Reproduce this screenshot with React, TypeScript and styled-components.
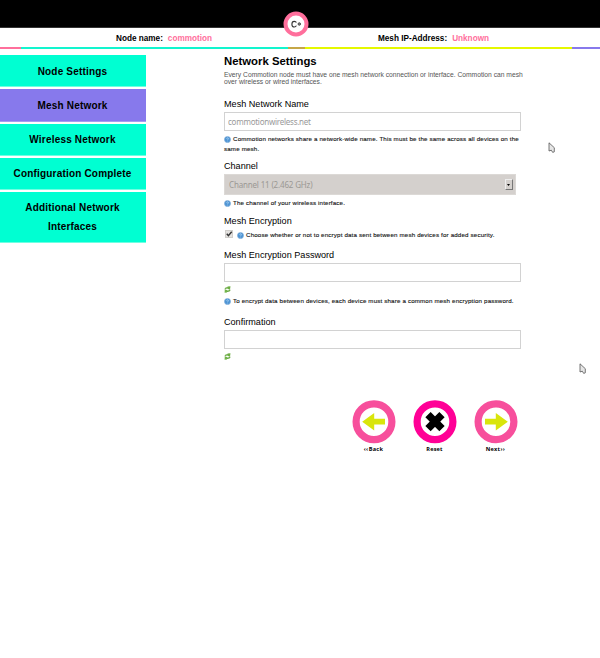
import React from "react";
import styled, { createGlobalStyle } from "styled-components";

const GlobalStyle = createGlobalStyle`
  * { box-sizing: border-box; }
  body { margin: 0; background: #fff; color: #000; font-family: "Liberation Sans", Arial, sans-serif; }
`;

const Page = styled.div`
  position: relative;
  height: 658px;
  overflow: hidden;
`;

const TopBar = styled.header`
  height: 28px;
  background: #000;
  border-bottom: 1px solid #333;
  display: flex;
  justify-content: center;
`;

const Logo = styled.svg`
  position: relative;
  z-index: 1;
  flex: none;
  width: 26px;
  height: 26px;
  margin: 10.5px 8px 0 0;
`;

const InfoBar = styled.div`
  height: 19px;
  display: flex;
  padding-left: 116px;
  font-size: 8.2px;
  font-weight: bold;
  line-height: 21px;
  white-space: nowrap;
`;

const Info = styled.div<{ $width?: number }>`
  width: ${(p) => (p.$width ? `${p.$width}px` : "auto")};
  display: flex;
  gap: 5px;
`;

const InfoValue = styled.span`
  color: #ff6f9c;
`;

const Stripe = styled.div`
  display: flex;
  height: 2px;
`;

const Segment = styled.div<{ $color: string; $width: number }>`
  width: ${(p) => p.$width}px;
  background: ${(p) => p.$color};
`;

const Body = styled.div`
  display: grid;
  grid-template-columns: 146px 300px;
  column-gap: 78px;
  align-items: start;
`;

const Nav = styled.nav`
  display: flex;
  flex-direction: column;
  gap: 2px;
  padding-top: 6.4px;
`;

const NavItem = styled.a<{ $active?: boolean; $tall?: boolean }>`
  height: ${(p) => (p.$tall ? 51 : 32.1)}px;
  padding: 7.5px 9px 0 8px;
  border: solid ${(p) => (p.$active ? "#a79df0" : "#6fffe2")};
  border-width: 0 0 1px;
  background: ${(p) => (p.$active ? "#8779ec" : "#00ffd2")};
  font-size: 10px;
  font-weight: bold;
  letter-spacing: 0.19px;
  line-height: 18.4px;
  text-align: center;
`;

const Main = styled.main`
  padding-top: 5px;
`;

const Title = styled.h1`
  margin: 0;
  height: 17px;
  font-size: 11.35px;
  line-height: 15px;
`;

const Description = styled.p`
  margin: 0;
  height: 26px;
  color: #555;
  font-size: 6.73px;
  line-height: 7px;
  white-space: nowrap;
`;

const Field = styled.section<{ $height: number }>`
  height: ${(p) => p.$height}px;
`;

const Label = styled.label`
  display: block;
  height: 15px;
  font-size: 9.1px;
  line-height: 14px;
  white-space: nowrap;
`;

const Input = styled.input`
  display: block;
  width: 297px;
  height: 19px;
  padding: 0 3px;
  border: 1px solid #d2d2d2;
  border-radius: 0;
  background: #fff;
  color: #555;
  font: 8px "Noto Sans", sans-serif;
  letter-spacing: -0.25px;
  &::placeholder { color: #999; opacity: 1; }
`;

const Select = styled.div`
  display: flex;
  align-items: center;
  justify-content: space-between;
  width: 292px;
  height: 21px;
  padding: 0 2.5px 0 4px;
  border: 1px solid #dcd9d6;
  background: #d4d0cd;
  color: #9b9894;
  font: 8px "Noto Sans", sans-serif;
  letter-spacing: -0.17px;
`;

const Spinner = styled.span`
  display: flex;
  align-items: center;
  justify-content: center;
  width: 8px;
  height: 11px;
  border: 1px solid;
  border-color: #eee #777 #777 #eee;
  background: #d4d0cd;
`;

const Help = styled.div<{ $inline?: boolean }>`
  display: flex;
  gap: 2px;
  padding-top: ${(p) => (p.$inline ? 1 : 3)}px;
  font-size: 6.2px;
  letter-spacing: 0.157px;
  color: #111;
  line-height: 10px;
  white-space: nowrap;
  -webkit-text-stroke: 0.12px #111;
`;

const Wrapped = styled.span`
  display: block;
  margin-left: -9px;
`;

const CheckRow = styled.div`
  display: flex;
  align-items: flex-start;
  gap: 4px;
`;

const SmallIcon = styled.svg<{ $top?: number }>`
  flex: none;
  display: block;
  width: 7px;
  height: 7px;
  margin-top: ${(p) => p.$top ?? 0}px;
`;

const CheckIcon = styled.svg`
  flex: none;
  width: 8px;
  height: 8px;
  margin: 1px 0 0 1px;
`;

const Actions = styled.div`
  display: flex;
  gap: 17px;
  margin: 0 0 0 127.5px;
`;

const Action = styled.button`
  width: 44px;
  padding: 0;
  border: 0;
  background: none;
  color: #000;
  font: bold 5.6px "Open Sans", sans-serif;
  line-height: 10px;
  letter-spacing: 0.2px;
  word-spacing: -1.2px;
  white-space: nowrap;
`;

const ActionIcon = styled.svg`
  display: block;
  width: 44px;
  height: 44px;
`;

const Pointer = styled.svg<{ $x: number; $y: number }>`
  position: absolute;
  left: ${(p) => p.$x}px;
  top: ${(p) => p.$y}px;
  width: 8px;
  height: 12px;
`;

const HelpIcon = () => (
  <SmallIcon viewBox="0 0 7 7" $top={1.5}>
    <circle cx="3.5" cy="3.5" r="3.1" fill="#4d94d4" stroke="#8bb4dc" strokeWidth=".6" />
    <path d="M2.5 2.6Q3.7 1.3 4.4 2.6Q4.4 3.3 3.5 3.8M3.4 4.8V5.3" fill="none" stroke="#c9e4fb" strokeWidth=".8" />
  </SmallIcon>
);

const RefreshIcon = () => (
  <SmallIcon viewBox="0 0 7 7" $top={4}>
    <path d="M1.3 3.6Q1.3 1.6 4 1.9" fill="none" stroke="#77b255" strokeWidth="1.5" />
    <path d="M3.5 .4L6.5 .2L6 3.4L3.7 3Z" fill="#6eae43" />
    <path d="M5.8 3.6Q5.6 5.5 3 5.2" fill="none" stroke="#6aaa45" strokeWidth="1.5" />
    <path d="M.8 3.7L3.3 4L3 6.6L.6 6.8Z" fill="#72b44a" />
  </SmallIcon>
);

const arrow = "M10.2 21.7L22.2 13V18.8H33V24.6H22.2V30.6Z";

const ActionButton = ({ label, color, children }: { label: string; color: string; children: React.ReactNode }) => (
  <Action type="button">
    <ActionIcon viewBox="0 0 44 44">
      <circle cx="22" cy="21.7" r="17.9" fill="#fff" stroke={color} strokeWidth="7.2" />
      {children}
    </ActionIcon>
    {label}
  </Action>
);

const Arrow = ({ x, y }: { x: number; y: number }) => (
  <Pointer viewBox="0 0 8 12" $x={x} $y={y}>
    <path d="M1 .8V9L3.3 8.2L4.7 10.4L6.3 9.8V5.7Z" fill="#e6e6e6" stroke="#555" strokeWidth=".8" />
  </Pointer>
);

export default function App() {
  return (
    <Page>
      <GlobalStyle />
      <TopBar>
        <Logo viewBox="0 0 26 26">
          <circle cx="13" cy="13" r="10.5" fill="#fff" stroke="#ff6f9c" strokeWidth="4" />
          <path d="M13.4 11.6Q12.8 10.4 11.3 10.4Q8.9 10.4 8.9 13.2Q8.9 16 11.3 16Q12.8 16 13.4 14.6" fill="none" stroke="#333" strokeWidth="1.1" />
          <circle cx="16.3" cy="13" r="1.25" fill="#888" stroke="#444" strokeWidth=".9" />
        </Logo>
      </TopBar>
      <InfoBar>
        <Info $width={262}>Node name: <InfoValue>commotion</InfoValue></Info>
        <Info>Mesh IP-Address: <InfoValue>Unknown</InfoValue></Info>
      </InfoBar>
      <Stripe>
        <Segment $width={21.3} $color="#ff6f9c" />
        <Segment $width={266.4} $color="#12f5ce" />
        <Segment $width={17.8} $color="#c5a747" />
        <Segment $width={267} $color="#e5f800" />
        <Segment $width={27.5} $color="#8779ec" />
      </Stripe>
      <Body>
        <Nav>
          <NavItem>Node Settings</NavItem>
          <NavItem $active>Mesh Network</NavItem>
          <NavItem>Wireless Network</NavItem>
          <NavItem>Configuration Complete</NavItem>
          <NavItem $tall>Additional Network<br />Interfaces</NavItem>
        </Nav>
        <Main>
          <Title>Network Settings</Title>
          <Description>
            Every Commotion node must have one mesh network connection or interface. Commotion can mesh<br />
            over wireless or wired interfaces.
          </Description>
          <Field $height={62}>
            <Label>Mesh Network Name</Label>
            <Input placeholder="commotionwireless.net" />
            <Help>
              <HelpIcon />
              <span>
                Commotion networks share a network-wide name. This must be the same across all devices on the
                <Wrapped>same mesh.</Wrapped>
              </span>
            </Help>
          </Field>
          <Field $height={55}>
            <Label>Channel</Label>
            <Select>
              Channel 11 (2.462 GHz)
              <Spinner>
                <svg width="3" height="2" viewBox="0 0 3 2"><path d="M0 0H3L1.5 2Z" fill="#000" /></svg>
              </Spinner>
            </Select>
            <Help><HelpIcon /><span>The channel of your wireless interface.</span></Help>
          </Field>
          <Field $height={34}>
            <Label>Mesh Encryption</Label>
            <CheckRow>
              <CheckIcon viewBox="0 0 8 8">
                <rect x=".5" y=".5" width="7" height="7" fill="#e4e2e0" stroke="#d0cecb" />
                <path d="M1.8 3.8L3.4 5.7L6.7 1.8" fill="none" stroke="#333" strokeWidth="1.4" />
              </CheckIcon>
              <Help $inline><HelpIcon /><span>Choose whether or not to encrypt data sent between mesh devices for added security.</span></Help>
            </CheckRow>
          </Field>
          <Field $height={67}>
            <Label>Mesh Encryption Password</Label>
            <Input type="password" />
            <RefreshIcon />
            <Help><HelpIcon /><span>To encrypt data between devices, each device must share a common mesh encryption password.</span></Help>
          </Field>
          <Field $height={85}>
            <Label>Confirmation</Label>
            <Input type="password" />
            <RefreshIcon />
          </Field>
          <Actions>
            <ActionButton label="‹‹ Back" color="#f74f9c"><path d={arrow} fill="#d9e50b" /></ActionButton>
            <ActionButton label="Reset" color="#ff0096">
              <path d="M15 14.7L29 28.7M29 14.7L15 28.7" stroke="#000" strokeWidth="7.5" />
            </ActionButton>
            <ActionButton label="Next ››" color="#f74f9c"><path d={arrow} fill="#d9e50b" transform="translate(44 0) scale(-1 1)" /></ActionButton>
          </Actions>
        </Main>
      </Body>
      <Arrow x={548} y={142} />
      <Arrow x={578.5} y={363} />
    </Page>
  );
}
